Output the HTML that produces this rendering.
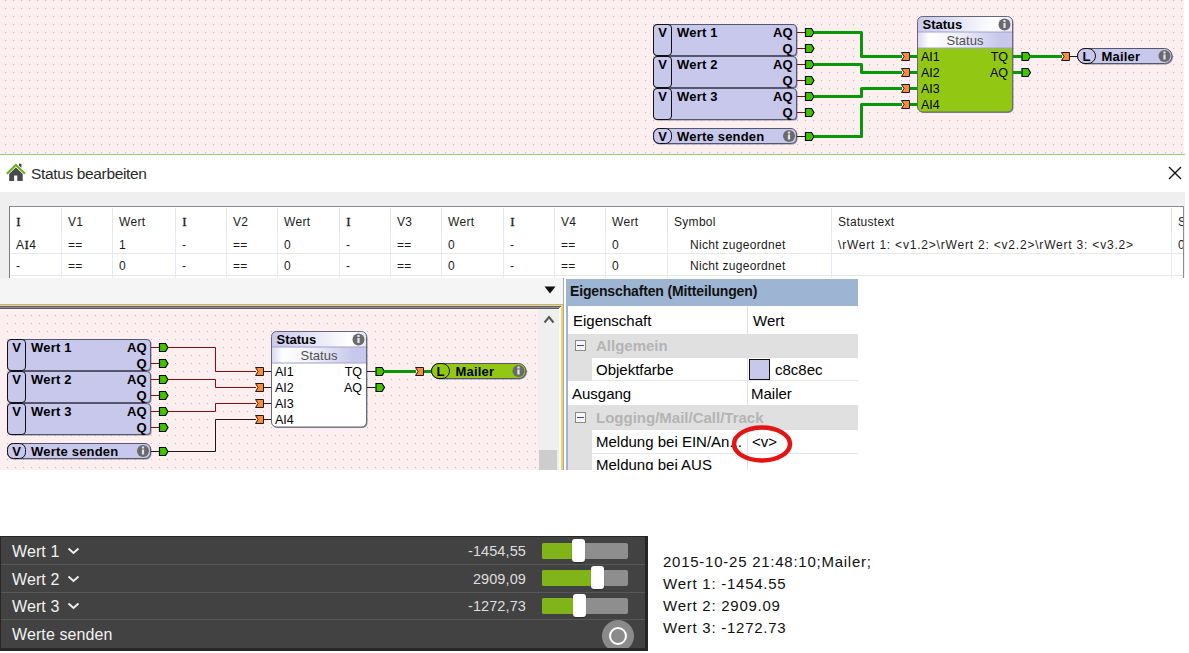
<!DOCTYPE html>
<html><head><meta charset="utf-8">
<style>
*{box-sizing:border-box}
html,body{margin:0;padding:0}
body{width:1189px;height:653px;position:relative;overflow:hidden;background:#fff;font-family:"Liberation Sans",sans-serif;color:#000}
.abs{position:absolute}
.tbl{position:absolute;left:9px;top:206px;width:1175px;height:72px;background:#fff;border-top:1px solid #868b94;border-left:1px solid #767b84;border-right:1px solid #868b94;overflow:hidden}
.tt{position:absolute;font-size:12px;color:#1c1c1c;letter-spacing:0.3px;white-space:nowrap;line-height:14px}
.vl{position:absolute;width:1px}
.si{font-family:"Liberation Serif",serif;font-size:13px;-webkit-text-stroke:0.3px #1c1c1c;letter-spacing:0;margin:0 0.2px 0 0.3px}
.pp{position:absolute;font-size:15px;white-space:nowrap;line-height:18px}
.dk{position:absolute;font-size:16px;letter-spacing:0.1px;color:#f2f2f2;white-space:nowrap;line-height:18px}
.lg{position:absolute;left:663px;font-size:15px;color:#111;white-space:nowrap;letter-spacing:0.75px;line-height:18px}
</style></head><body>

<!-- top canvas -->
<svg class="abs" style="left:0;top:0" width="1184" height="154" viewBox="0 0 1184 154">
<defs><pattern id="dotT" x="5" y="0" width="8" height="8" patternUnits="userSpaceOnUse"><rect width="1" height="1" fill="#bcbcbc"/></pattern></defs>
<rect width="1184" height="154" fill="#fdefef"/>
<rect width="1184" height="154" fill="url(#dotT)"/>
<g transform="translate(646,-315)">
<rect x="8.5" y="340.5" width="143" height="31" rx="3.5" fill="#8c8c9c"/>
<rect x="7.5" y="339.5" width="143" height="31" rx="3.5" fill="#c8c8ec" stroke="#56566a"/>
<rect x="7.5" y="339.5" width="18" height="31" rx="3.5" fill="#c8c8ec" stroke="#111"/>
<text x="16.5" y="352.0" text-anchor="middle" font-weight="bold" font-size="13" font-family="Liberation Sans, sans-serif">V</text>
<text x="31" y="352.0" font-weight="bold" font-size="13" letter-spacing="0.2" font-family="Liberation Sans, sans-serif">Wert 1</text>
<text x="146.5" y="352.0" text-anchor="end" font-size="13" font-family="Liberation Sans, sans-serif" font-weight="bold">AQ</text>
<text x="146.5" y="367.5" text-anchor="end" font-size="13" font-family="Liberation Sans, sans-serif" font-weight="bold">Q</text>
<polyline points="151,347.5 159,347.5" fill="none" stroke="#8a0e0e" stroke-width="1"/>
<polyline points="151,363.5 159,363.5" fill="none" stroke="#8a0e0e" stroke-width="1"/>
<path d="M159.5 343.5h6l2.5 4l-2.5 4h-6z" fill="#40c400" stroke="#050a00" stroke-width="1.2"/>
<path d="M159.5 359.5h6l2.5 4l-2.5 4h-6z" fill="#40c400" stroke="#050a00" stroke-width="1.2"/>
<rect x="8.5" y="372.5" width="143" height="31" rx="3.5" fill="#8c8c9c"/>
<rect x="7.5" y="371.5" width="143" height="31" rx="3.5" fill="#c8c8ec" stroke="#56566a"/>
<rect x="7.5" y="371.5" width="18" height="31" rx="3.5" fill="#c8c8ec" stroke="#111"/>
<text x="16.5" y="384.0" text-anchor="middle" font-weight="bold" font-size="13" font-family="Liberation Sans, sans-serif">V</text>
<text x="31" y="384.0" font-weight="bold" font-size="13" letter-spacing="0.2" font-family="Liberation Sans, sans-serif">Wert 2</text>
<text x="146.5" y="384.0" text-anchor="end" font-size="13" font-family="Liberation Sans, sans-serif" font-weight="bold">AQ</text>
<text x="146.5" y="399.5" text-anchor="end" font-size="13" font-family="Liberation Sans, sans-serif" font-weight="bold">Q</text>
<polyline points="151,379.5 159,379.5" fill="none" stroke="#8a0e0e" stroke-width="1"/>
<polyline points="151,395.5 159,395.5" fill="none" stroke="#8a0e0e" stroke-width="1"/>
<path d="M159.5 375.5h6l2.5 4l-2.5 4h-6z" fill="#40c400" stroke="#050a00" stroke-width="1.2"/>
<path d="M159.5 391.5h6l2.5 4l-2.5 4h-6z" fill="#40c400" stroke="#050a00" stroke-width="1.2"/>
<rect x="8.5" y="404.5" width="143" height="31" rx="3.5" fill="#8c8c9c"/>
<rect x="7.5" y="403.5" width="143" height="31" rx="3.5" fill="#c8c8ec" stroke="#56566a"/>
<rect x="7.5" y="403.5" width="18" height="31" rx="3.5" fill="#c8c8ec" stroke="#111"/>
<text x="16.5" y="416.0" text-anchor="middle" font-weight="bold" font-size="13" font-family="Liberation Sans, sans-serif">V</text>
<text x="31" y="416.0" font-weight="bold" font-size="13" letter-spacing="0.2" font-family="Liberation Sans, sans-serif">Wert 3</text>
<text x="146.5" y="416.0" text-anchor="end" font-size="13" font-family="Liberation Sans, sans-serif" font-weight="bold">AQ</text>
<text x="146.5" y="431.5" text-anchor="end" font-size="13" font-family="Liberation Sans, sans-serif" font-weight="bold">Q</text>
<polyline points="151,411.5 159,411.5" fill="none" stroke="#8a0e0e" stroke-width="1"/>
<polyline points="151,427.5 159,427.5" fill="none" stroke="#8a0e0e" stroke-width="1"/>
<path d="M159.5 407.5h6l2.5 4l-2.5 4h-6z" fill="#40c400" stroke="#050a00" stroke-width="1.2"/>
<path d="M159.5 423.5h6l2.5 4l-2.5 4h-6z" fill="#40c400" stroke="#050a00" stroke-width="1.2"/>
<rect x="8.5" y="444.5" width="143" height="15" rx="5.5" fill="#8c8c9c"/>
<rect x="7.5" y="443.5" width="143" height="15" rx="5.5" fill="#c8c8ec" stroke="#56566a"/>
<rect x="7.5" y="443.5" width="18" height="15" rx="6" fill="#c8c8ec" stroke="#111"/>
<text x="16.5" y="456" text-anchor="middle" font-weight="bold" font-size="13" font-family="Liberation Sans, sans-serif">V</text>
<text x="31" y="456" font-weight="bold" font-size="13" letter-spacing="0.2" font-family="Liberation Sans, sans-serif">Werte senden</text>
<circle cx="143" cy="451" r="6" fill="#6a6a6a"/><rect x="141.9" y="449.5" width="2.2" height="5" fill="#e4e4f4"/><rect x="141.9" y="446.5" width="2.2" height="2" fill="#e4e4f4"/>
<polyline points="151,451.5 159,451.5" fill="none" stroke="#1a1a1a" stroke-width="1"/>
<path d="M159.5 447.5h6l2.5 4l-2.5 4h-6z" fill="#40c400" stroke="#050a00" stroke-width="1.2"/>
<polyline points="168,347.5 215.5,347.5 215.5,371.5 256,371.5" fill="none" stroke="#079807" stroke-width="3" stroke-linejoin="round"/>
<polyline points="168,379.5 215.5,379.5 215.5,387.5 256,387.5" fill="none" stroke="#079807" stroke-width="3" stroke-linejoin="round"/>
<polyline points="168,411.5 215.5,411.5 215.5,403.5 256,403.5" fill="none" stroke="#079807" stroke-width="3" stroke-linejoin="round"/>
<polyline points="168,451.5 215.5,451.5 215.5,419.5 256,419.5" fill="none" stroke="#079807" stroke-width="3" stroke-linejoin="round"/>
<polyline points="264,371.5 272,371.5" fill="none" stroke="#079807" stroke-width="3" stroke-linejoin="round"/>
<path d="M255.5 367.5h8v8h-8l2.5 -4z" fill="#ff8a3a" stroke="#1a1a1a" stroke-width="1"/>
<polyline points="264,387.5 272,387.5" fill="none" stroke="#079807" stroke-width="3" stroke-linejoin="round"/>
<path d="M255.5 383.5h8v8h-8l2.5 -4z" fill="#ff8a3a" stroke="#1a1a1a" stroke-width="1"/>
<polyline points="264,403.5 272,403.5" fill="none" stroke="#079807" stroke-width="3" stroke-linejoin="round"/>
<path d="M255.5 399.5h8v8h-8l2.5 -4z" fill="#ff8a3a" stroke="#1a1a1a" stroke-width="1"/>
<polyline points="264,419.5 272,419.5" fill="none" stroke="#079807" stroke-width="3" stroke-linejoin="round"/>
<path d="M255.5 415.5h8v8h-8l2.5 -4z" fill="#ff8a3a" stroke="#1a1a1a" stroke-width="1"/>
<defs><linearGradient id="hg1" x1="0" x2="1"><stop offset="0" stop-color="#c8c8ec"/><stop offset="0.82" stop-color="#ffffff"/><stop offset="1" stop-color="#e8e8f6"/></linearGradient><linearGradient id="sg1" x1="0" x2="1"><stop offset="0" stop-color="#d8d8ee"/><stop offset="0.12" stop-color="#ffffff"/><stop offset="0.4" stop-color="#f2f2fa"/><stop offset="0.85" stop-color="#c8c8ec"/><stop offset="1" stop-color="#c8c8ec"/></linearGradient><clipPath id="cp1"><rect x="271.5" y="331.5" width="95" height="95.5" rx="5"/></clipPath></defs>
<rect x="272.5" y="332.5" width="95" height="95.5" rx="5" fill="#8c8c9c"/>
<g clip-path="url(#cp1)">
<rect x="271.5" y="331.5" width="95" height="96" fill="#92c814"/>
<rect x="271.5" y="331.5" width="95" height="15.5" fill="url(#hg1)"/>
<rect x="271.5" y="347" width="95" height="16" fill="url(#sg1)"/>
<line x1="271" y1="347" x2="367" y2="347" stroke="#a0a0d0"/>
<line x1="271" y1="363" x2="367" y2="363" stroke="#a0a0d0"/>
</g>
<rect x="271.5" y="331.5" width="95" height="95.5" rx="5" fill="none" stroke="#66667a"/>
<text x="276.5" y="343.5" font-weight="bold" font-size="13" font-family="Liberation Sans, sans-serif">Status</text>
<circle cx="358.5" cy="339.5" r="6" fill="#6a6a6a"/><rect x="357.4" y="338.0" width="2.2" height="5" fill="#e4e4f4"/><rect x="357.4" y="335.0" width="2.2" height="2" fill="#e4e4f4"/>
<text x="319" y="359.5" text-anchor="middle" font-size="13" fill="#505050" font-family="Liberation Sans, sans-serif">Status</text>
<text x="275" y="375.5" font-size="12.5" font-family="Liberation Sans, sans-serif">AI1</text>
<text x="275" y="391.5" font-size="12.5" font-family="Liberation Sans, sans-serif">AI2</text>
<text x="275" y="407.5" font-size="12.5" font-family="Liberation Sans, sans-serif">AI3</text>
<text x="275" y="423.5" font-size="12.5" font-family="Liberation Sans, sans-serif">AI4</text>
<text x="362" y="375.5" text-anchor="end" font-size="12.5" font-family="Liberation Sans, sans-serif">TQ</text>
<text x="362" y="391.5" text-anchor="end" font-size="12.5" font-family="Liberation Sans, sans-serif">AQ</text>
<polyline points="367,371.5 375.5,371.5" fill="none" stroke="#079807" stroke-width="3" stroke-linejoin="round"/>
<path d="M376.0 367.5h6l2.5 4l-2.5 4h-6z" fill="#40c400" stroke="#050a00" stroke-width="1.2"/>
<polyline points="367,387.5 375.5,387.5" fill="none" stroke="#079807" stroke-width="3" stroke-linejoin="round"/>
<path d="M376.0 383.5h6l2.5 4l-2.5 4h-6z" fill="#40c400" stroke="#050a00" stroke-width="1.2"/>
<polyline points="384,371.5 416,371.5" fill="none" stroke="#079807" stroke-width="3" stroke-linejoin="round"/>
<polyline points="424,371.5 432,371.5" fill="none" stroke="#1a1a1a" stroke-width="1"/>
<path d="M415.5 367.5h8v8h-8l2.5 -4z" fill="#ff8a3a" stroke="#1a1a1a" stroke-width="1"/>
<rect x="432.5" y="364.5" width="94.5" height="15" rx="7.5" fill="#8c8c9c"/>
<rect x="431.5" y="363.5" width="94.5" height="15" rx="7.5" fill="#c8c8ec" stroke="#56566a"/>
<rect x="431.5" y="363.5" width="18" height="15" rx="7.5" fill="#c8c8ec" stroke="#111"/>
<text x="440.5" y="376" text-anchor="middle" font-weight="bold" font-size="13" font-family="Liberation Sans, sans-serif">L</text>
<text x="455.5" y="376" font-weight="bold" font-size="13" letter-spacing="0.2" font-family="Liberation Sans, sans-serif">Mailer</text>
<circle cx="518.5" cy="371" r="6" fill="#6a6a6a"/><rect x="517.4" y="369.5" width="2.2" height="5" fill="#e4e4f4"/><rect x="517.4" y="366.5" width="2.2" height="2" fill="#e4e4f4"/>
</g>
</svg>
<div class="abs" style="left:0;top:154px;width:1185px;height:1px;background:#9ccb6a"></div>

<!-- header -->
<svg class="abs" style="left:6px;top:163px" width="20" height="19" viewBox="0 0 20 19">
<path d="M13 0.8h2.4v4.2l-2.4-2z" fill="#3c3c3c"/>
<path d="M3.2 10.2 L9.9 4 L16.7 10.2 V18 H11.3 V12.6 H8.1 V18 H3.2 Z" fill="#4a4a4c"/>
<path d="M0.8 10.8 L9.9 2 L19 10.8" fill="none" stroke="#fff" stroke-width="3.4"/>
<path d="M0.8 10.8 L9.9 2 L19 10.8" fill="none" stroke="#6cae1c" stroke-width="2.1"/>
</svg>
<div class="abs" style="left:31px;top:164px;font-size:15.5px;color:#2a2a2a;line-height:20px;white-space:nowrap;letter-spacing:-0.35px">Status bearbeiten</div>
<svg class="abs" style="left:1168px;top:166px" width="14" height="14" viewBox="0 0 14 14"><path d="M1 1L13 13M13 1L1 13" stroke="#111" stroke-width="1.4"/></svg>

<!-- grey band -->
<div class="abs" style="left:0;top:192px;width:1185px;height:86px;background:#efefef"></div>
<div class="tbl">
<div class="vl" style="left:51px;top:1px;height:24px;background:#e4e4e4"></div>
<div class="vl" style="left:51px;top:25px;height:46px;background:#e3ebf6"></div>
<div class="vl" style="left:102px;top:1px;height:24px;background:#e4e4e4"></div>
<div class="vl" style="left:102px;top:25px;height:46px;background:#e3ebf6"></div>
<div class="vl" style="left:165px;top:1px;height:24px;background:#e4e4e4"></div>
<div class="vl" style="left:165px;top:25px;height:46px;background:#e3ebf6"></div>
<div class="vl" style="left:216px;top:1px;height:24px;background:#e4e4e4"></div>
<div class="vl" style="left:216px;top:25px;height:46px;background:#e3ebf6"></div>
<div class="vl" style="left:267px;top:1px;height:24px;background:#e4e4e4"></div>
<div class="vl" style="left:267px;top:25px;height:46px;background:#e3ebf6"></div>
<div class="vl" style="left:329px;top:1px;height:24px;background:#e4e4e4"></div>
<div class="vl" style="left:329px;top:25px;height:46px;background:#e3ebf6"></div>
<div class="vl" style="left:380px;top:1px;height:24px;background:#e4e4e4"></div>
<div class="vl" style="left:380px;top:25px;height:46px;background:#e3ebf6"></div>
<div class="vl" style="left:431px;top:1px;height:24px;background:#e4e4e4"></div>
<div class="vl" style="left:431px;top:25px;height:46px;background:#e3ebf6"></div>
<div class="vl" style="left:493px;top:1px;height:24px;background:#e4e4e4"></div>
<div class="vl" style="left:493px;top:25px;height:46px;background:#e3ebf6"></div>
<div class="vl" style="left:544px;top:1px;height:24px;background:#e4e4e4"></div>
<div class="vl" style="left:544px;top:25px;height:46px;background:#e3ebf6"></div>
<div class="vl" style="left:595px;top:1px;height:24px;background:#e4e4e4"></div>
<div class="vl" style="left:595px;top:25px;height:46px;background:#e3ebf6"></div>
<div class="vl" style="left:657px;top:1px;height:24px;background:#e4e4e4"></div>
<div class="vl" style="left:657px;top:25px;height:46px;background:#e3ebf6"></div>
<div class="vl" style="left:821px;top:1px;height:24px;background:#e4e4e4"></div>
<div class="vl" style="left:821px;top:25px;height:46px;background:#e3ebf6"></div>
<div class="vl" style="left:1161px;top:1px;height:24px;background:#e4e4e4"></div>
<div class="vl" style="left:1161px;top:25px;height:46px;background:#e3ebf6"></div>
<div class="abs" style="left:1px;top:46px;width:1173px;height:1px;background:#e8e8e8"></div>
<div class="abs" style="left:1px;top:68px;width:1173px;height:1px;background:#e8e8e8"></div>
<div class="tt" style="left:6px;top:8px"><span class="si">I</span></div>
<div class="tt" style="left:6px;top:31px">A<span class="si">I</span>4</div>
<div class="tt" style="left:6px;top:52px">-</div>
<div class="tt" style="left:58px;top:8px">V1</div>
<div class="tt" style="left:58px;top:31px">==</div>
<div class="tt" style="left:58px;top:52px">==</div>
<div class="tt" style="left:109px;top:8px">Wert</div>
<div class="tt" style="left:109px;top:31px">1</div>
<div class="tt" style="left:109px;top:52px">0</div>
<div class="tt" style="left:172px;top:8px"><span class="si">I</span></div>
<div class="tt" style="left:172px;top:31px">-</div>
<div class="tt" style="left:172px;top:52px">-</div>
<div class="tt" style="left:223px;top:8px">V2</div>
<div class="tt" style="left:223px;top:31px">==</div>
<div class="tt" style="left:223px;top:52px">==</div>
<div class="tt" style="left:274px;top:8px">Wert</div>
<div class="tt" style="left:274px;top:31px">0</div>
<div class="tt" style="left:274px;top:52px">0</div>
<div class="tt" style="left:336px;top:8px"><span class="si">I</span></div>
<div class="tt" style="left:336px;top:31px">-</div>
<div class="tt" style="left:336px;top:52px">-</div>
<div class="tt" style="left:387px;top:8px">V3</div>
<div class="tt" style="left:387px;top:31px">==</div>
<div class="tt" style="left:387px;top:52px">==</div>
<div class="tt" style="left:438px;top:8px">Wert</div>
<div class="tt" style="left:438px;top:31px">0</div>
<div class="tt" style="left:438px;top:52px">0</div>
<div class="tt" style="left:500px;top:8px"><span class="si">I</span></div>
<div class="tt" style="left:500px;top:31px">-</div>
<div class="tt" style="left:500px;top:52px">-</div>
<div class="tt" style="left:551px;top:8px">V4</div>
<div class="tt" style="left:551px;top:31px">==</div>
<div class="tt" style="left:551px;top:52px">==</div>
<div class="tt" style="left:602px;top:8px">Wert</div>
<div class="tt" style="left:602px;top:31px">0</div>
<div class="tt" style="left:602px;top:52px">0</div>
<div class="tt" style="left:664px;top:8px">Symbol</div>
<div class="tt" style="left:680px;top:31px">Nicht zugeordnet</div>
<div class="tt" style="left:680px;top:52px">Nicht zugeordnet</div>
<div class="tt" style="left:828px;top:8px">Statustext</div>
<div class="tt" style="left:828px;top:31px;letter-spacing:0.8px">\rWert 1: &lt;v1.2&gt;\rWert 2: &lt;v2.2&gt;\rWert 3: &lt;v3.2&gt;</div>
<div class="tt" style="left:828px;top:52px"></div>
<div class="tt" style="left:1168px;top:8px">S</div>
<div class="tt" style="left:1168px;top:31px">0</div>
<div class="tt" style="left:1168px;top:52px"></div>
</div>

<!-- toolbar -->
<div class="abs" style="left:0;top:278px;width:563px;height:26px;background:#f5f5f5"></div>
<div class="abs" style="left:563px;top:278px;width:1px;height:192px;background:#a8a8a8"></div>
<svg class="abs" style="left:544px;top:286px" width="12" height="8" viewBox="0 0 12 8"><path d="M0.5 0.5H11.5L6 7.5Z" fill="#111"/></svg>

<!-- frame lines -->
<div class="abs" style="left:0;top:304px;width:563px;height:1px;background:#b4b4b4"></div>
<div class="abs" style="left:0;top:305px;width:563px;height:1px;background:#f8d060"></div>
<div class="abs" style="left:559px;top:306px;width:2px;height:164px;background:#fafafa"></div>
<div class="abs" style="left:561px;top:305px;width:2px;height:165px;background:#f8d060"></div>
<div class="abs" style="left:0;top:306px;width:561px;height:1px;background:#666"></div>
<div class="abs" style="left:0;top:307px;width:560px;height:1px;background:#8c8c8c"></div>
<div class="abs" style="left:0;top:308px;width:559px;height:1px;background:#5e5e5e"></div>

<!-- bottom canvas -->
<svg class="abs" style="left:0;top:309px" width="538" height="161" viewBox="0 309 538 161">
<defs><pattern id="dotB" x="7" y="3" width="8" height="8" patternUnits="userSpaceOnUse"><rect width="1" height="1" fill="#bcbcbc"/></pattern></defs>
<rect x="0" y="309" width="538" height="161" fill="#fdefef"/>
<rect x="0" y="309" width="538" height="161" fill="url(#dotB)"/>
<rect x="8.5" y="340.5" width="143" height="31" rx="3.5" fill="#8c8c9c"/>
<rect x="7.5" y="339.5" width="143" height="31" rx="3.5" fill="#c8c8ec" stroke="#56566a"/>
<rect x="7.5" y="339.5" width="18" height="31" rx="3.5" fill="#c8c8ec" stroke="#111"/>
<text x="16.5" y="352.0" text-anchor="middle" font-weight="bold" font-size="13" font-family="Liberation Sans, sans-serif">V</text>
<text x="31" y="352.0" font-weight="bold" font-size="13" letter-spacing="0.2" font-family="Liberation Sans, sans-serif">Wert 1</text>
<text x="146.5" y="352.0" text-anchor="end" font-size="13" font-family="Liberation Sans, sans-serif" font-weight="bold">AQ</text>
<text x="146.5" y="367.5" text-anchor="end" font-size="13" font-family="Liberation Sans, sans-serif" font-weight="bold">Q</text>
<polyline points="151,347.5 159,347.5" fill="none" stroke="#8a0e0e" stroke-width="1"/>
<polyline points="151,363.5 159,363.5" fill="none" stroke="#8a0e0e" stroke-width="1"/>
<path d="M159.5 343.5h6l2.5 4l-2.5 4h-6z" fill="#40c400" stroke="#050a00" stroke-width="1.2"/>
<path d="M159.5 359.5h6l2.5 4l-2.5 4h-6z" fill="#40c400" stroke="#050a00" stroke-width="1.2"/>
<rect x="8.5" y="372.5" width="143" height="31" rx="3.5" fill="#8c8c9c"/>
<rect x="7.5" y="371.5" width="143" height="31" rx="3.5" fill="#c8c8ec" stroke="#56566a"/>
<rect x="7.5" y="371.5" width="18" height="31" rx="3.5" fill="#c8c8ec" stroke="#111"/>
<text x="16.5" y="384.0" text-anchor="middle" font-weight="bold" font-size="13" font-family="Liberation Sans, sans-serif">V</text>
<text x="31" y="384.0" font-weight="bold" font-size="13" letter-spacing="0.2" font-family="Liberation Sans, sans-serif">Wert 2</text>
<text x="146.5" y="384.0" text-anchor="end" font-size="13" font-family="Liberation Sans, sans-serif" font-weight="bold">AQ</text>
<text x="146.5" y="399.5" text-anchor="end" font-size="13" font-family="Liberation Sans, sans-serif" font-weight="bold">Q</text>
<polyline points="151,379.5 159,379.5" fill="none" stroke="#8a0e0e" stroke-width="1"/>
<polyline points="151,395.5 159,395.5" fill="none" stroke="#8a0e0e" stroke-width="1"/>
<path d="M159.5 375.5h6l2.5 4l-2.5 4h-6z" fill="#40c400" stroke="#050a00" stroke-width="1.2"/>
<path d="M159.5 391.5h6l2.5 4l-2.5 4h-6z" fill="#40c400" stroke="#050a00" stroke-width="1.2"/>
<rect x="8.5" y="404.5" width="143" height="31" rx="3.5" fill="#8c8c9c"/>
<rect x="7.5" y="403.5" width="143" height="31" rx="3.5" fill="#c8c8ec" stroke="#56566a"/>
<rect x="7.5" y="403.5" width="18" height="31" rx="3.5" fill="#c8c8ec" stroke="#111"/>
<text x="16.5" y="416.0" text-anchor="middle" font-weight="bold" font-size="13" font-family="Liberation Sans, sans-serif">V</text>
<text x="31" y="416.0" font-weight="bold" font-size="13" letter-spacing="0.2" font-family="Liberation Sans, sans-serif">Wert 3</text>
<text x="146.5" y="416.0" text-anchor="end" font-size="13" font-family="Liberation Sans, sans-serif" font-weight="bold">AQ</text>
<text x="146.5" y="431.5" text-anchor="end" font-size="13" font-family="Liberation Sans, sans-serif" font-weight="bold">Q</text>
<polyline points="151,411.5 159,411.5" fill="none" stroke="#8a0e0e" stroke-width="1"/>
<polyline points="151,427.5 159,427.5" fill="none" stroke="#8a0e0e" stroke-width="1"/>
<path d="M159.5 407.5h6l2.5 4l-2.5 4h-6z" fill="#40c400" stroke="#050a00" stroke-width="1.2"/>
<path d="M159.5 423.5h6l2.5 4l-2.5 4h-6z" fill="#40c400" stroke="#050a00" stroke-width="1.2"/>
<rect x="8.5" y="444.5" width="143" height="15" rx="5.5" fill="#8c8c9c"/>
<rect x="7.5" y="443.5" width="143" height="15" rx="5.5" fill="#c8c8ec" stroke="#56566a"/>
<rect x="7.5" y="443.5" width="18" height="15" rx="6" fill="#c8c8ec" stroke="#111"/>
<text x="16.5" y="456" text-anchor="middle" font-weight="bold" font-size="13" font-family="Liberation Sans, sans-serif">V</text>
<text x="31" y="456" font-weight="bold" font-size="13" letter-spacing="0.2" font-family="Liberation Sans, sans-serif">Werte senden</text>
<circle cx="143" cy="451" r="6" fill="#6a6a6a"/><rect x="141.9" y="449.5" width="2.2" height="5" fill="#e4e4f4"/><rect x="141.9" y="446.5" width="2.2" height="2" fill="#e4e4f4"/>
<polyline points="151,451.5 159,451.5" fill="none" stroke="#1a1a1a" stroke-width="1"/>
<path d="M159.5 447.5h6l2.5 4l-2.5 4h-6z" fill="#40c400" stroke="#050a00" stroke-width="1.2"/>
<polyline points="168,347.5 215.5,347.5 215.5,371.5 256,371.5" fill="none" stroke="#8a0e0e" stroke-width="1"/>
<polyline points="168,379.5 215.5,379.5 215.5,387.5 256,387.5" fill="none" stroke="#8a0e0e" stroke-width="1"/>
<polyline points="168,411.5 215.5,411.5 215.5,403.5 256,403.5" fill="none" stroke="#8a0e0e" stroke-width="1"/>
<polyline points="168,451.5 215.5,451.5 215.5,419.5 256,419.5" fill="none" stroke="#1a1a1a" stroke-width="1"/>
<polyline points="264,371.5 272,371.5" fill="none" stroke="#1a1a1a" stroke-width="1"/>
<path d="M255.5 367.5h8v8h-8l2.5 -4z" fill="#ff8a3a" stroke="#1a1a1a" stroke-width="1"/>
<polyline points="264,387.5 272,387.5" fill="none" stroke="#1a1a1a" stroke-width="1"/>
<path d="M255.5 383.5h8v8h-8l2.5 -4z" fill="#ff8a3a" stroke="#1a1a1a" stroke-width="1"/>
<polyline points="264,403.5 272,403.5" fill="none" stroke="#1a1a1a" stroke-width="1"/>
<path d="M255.5 399.5h8v8h-8l2.5 -4z" fill="#ff8a3a" stroke="#1a1a1a" stroke-width="1"/>
<polyline points="264,419.5 272,419.5" fill="none" stroke="#1a1a1a" stroke-width="1"/>
<path d="M255.5 415.5h8v8h-8l2.5 -4z" fill="#ff8a3a" stroke="#1a1a1a" stroke-width="1"/>
<defs><linearGradient id="hg0" x1="0" x2="1"><stop offset="0" stop-color="#c8c8ec"/><stop offset="0.82" stop-color="#ffffff"/><stop offset="1" stop-color="#e8e8f6"/></linearGradient><linearGradient id="sg0" x1="0" x2="1"><stop offset="0" stop-color="#d8d8ee"/><stop offset="0.12" stop-color="#ffffff"/><stop offset="0.4" stop-color="#f2f2fa"/><stop offset="0.85" stop-color="#c8c8ec"/><stop offset="1" stop-color="#c8c8ec"/></linearGradient><clipPath id="cp0"><rect x="271.5" y="331.5" width="95" height="95.5" rx="5"/></clipPath></defs>
<rect x="272.5" y="332.5" width="95" height="95.5" rx="5" fill="#8c8c9c"/>
<g clip-path="url(#cp0)">
<rect x="271.5" y="331.5" width="95" height="96" fill="#ffffff"/>
<rect x="271.5" y="331.5" width="95" height="15.5" fill="url(#hg0)"/>
<rect x="271.5" y="347" width="95" height="16" fill="url(#sg0)"/>
<line x1="271" y1="347" x2="367" y2="347" stroke="#a0a0d0"/>
<line x1="271" y1="363" x2="367" y2="363" stroke="#a0a0d0"/>
</g>
<rect x="271.5" y="331.5" width="95" height="95.5" rx="5" fill="none" stroke="#66667a"/>
<text x="276.5" y="343.5" font-weight="bold" font-size="13" font-family="Liberation Sans, sans-serif">Status</text>
<circle cx="358.5" cy="339.5" r="6" fill="#6a6a6a"/><rect x="357.4" y="338.0" width="2.2" height="5" fill="#e4e4f4"/><rect x="357.4" y="335.0" width="2.2" height="2" fill="#e4e4f4"/>
<text x="319" y="359.5" text-anchor="middle" font-size="13" fill="#505050" font-family="Liberation Sans, sans-serif">Status</text>
<text x="275" y="375.5" font-size="12.5" font-family="Liberation Sans, sans-serif">AI1</text>
<text x="275" y="391.5" font-size="12.5" font-family="Liberation Sans, sans-serif">AI2</text>
<text x="275" y="407.5" font-size="12.5" font-family="Liberation Sans, sans-serif">AI3</text>
<text x="275" y="423.5" font-size="12.5" font-family="Liberation Sans, sans-serif">AI4</text>
<text x="362" y="375.5" text-anchor="end" font-size="12.5" font-family="Liberation Sans, sans-serif">TQ</text>
<text x="362" y="391.5" text-anchor="end" font-size="12.5" font-family="Liberation Sans, sans-serif">AQ</text>
<polyline points="367,371.5 375.5,371.5" fill="none" stroke="#1a1a1a" stroke-width="1"/>
<path d="M376.0 367.5h6l2.5 4l-2.5 4h-6z" fill="#40c400" stroke="#050a00" stroke-width="1.2"/>
<polyline points="367,387.5 375.5,387.5" fill="none" stroke="#1a1a1a" stroke-width="1"/>
<path d="M376.0 383.5h6l2.5 4l-2.5 4h-6z" fill="#40c400" stroke="#050a00" stroke-width="1.2"/>
<polyline points="384,371.5 416,371.5" fill="none" stroke="#079807" stroke-width="3" stroke-linejoin="round"/>
<polyline points="424,371.5 432,371.5" fill="none" stroke="#079807" stroke-width="3" stroke-linejoin="round"/>
<path d="M415.5 367.5h8v8h-8l2.5 -4z" fill="#ff8a3a" stroke="#1a1a1a" stroke-width="1"/>
<rect x="432.5" y="364.5" width="94.5" height="15" rx="7.5" fill="#8c8c9c"/>
<rect x="431.5" y="363.5" width="94.5" height="15" rx="7.5" fill="#92c814" stroke="#56566a"/>
<rect x="431.5" y="363.5" width="18" height="15" rx="7.5" fill="#92c814" stroke="#111"/>
<text x="440.5" y="376" text-anchor="middle" font-weight="bold" font-size="13" font-family="Liberation Sans, sans-serif">L</text>
<text x="455.5" y="376" font-weight="bold" font-size="13" letter-spacing="0.2" font-family="Liberation Sans, sans-serif">Mailer</text>
<circle cx="518.5" cy="371" r="6" fill="#6a6a6a"/><rect x="517.4" y="369.5" width="2.2" height="5" fill="#e4e4f4"/><rect x="517.4" y="366.5" width="2.2" height="2" fill="#e4e4f4"/>
</svg>
<!-- scrollbar -->
<div class="abs" style="left:538px;top:309px;width:21px;height:161px;background:#efefef"></div>
<svg class="abs" style="left:542.5px;top:315px" width="12" height="9" viewBox="0 0 12 9"><path d="M1.5 7.5L6 2L10.5 7.5" fill="none" stroke="#555" stroke-width="2"/></svg>
<div class="abs" style="left:539px;top:450px;width:18px;height:20px;background:#cdcdcd"></div>

<!-- properties -->
<div class="abs" style="left:566px;top:279px;width:292px;height:191px;background:#fff;overflow:hidden">
 <div class="abs" style="left:0;top:0;width:292px;height:27px;background:#9db4d2"></div>
 <div class="pp" style="left:4px;top:3.2px;font-weight:bold;font-size:14px;letter-spacing:-0.15px;color:#111">Eigenschaften (Mitteilungen)</div>
 <div class="abs" style="left:0;top:27px;width:2px;height:164px;background:#9db4d2"></div>
 <div class="abs" style="left:2px;top:55px;width:290px;height:24px;background:#e0e0e0"></div>
 <div class="abs" style="left:2px;top:79px;width:24px;height:23px;background:#e0e0e0"></div>
 <div class="abs" style="left:2px;top:126px;width:290px;height:25px;background:#e0e0e0"></div>
 <div class="abs" style="left:2px;top:151px;width:24px;height:40px;background:#e0e0e0"></div>
 <div class="abs" style="left:181px;top:27px;width:1px;height:28px;background:#e2e2e2"></div>
 <div class="abs" style="left:181px;top:79px;width:1px;height:47px;background:#e2e2e2"></div>
 <div class="abs" style="left:181px;top:151px;width:1px;height:40px;background:#e2e2e2"></div>
 <div class="abs" style="left:26px;top:101px;width:266px;height:1px;background:#e6e6e6"></div>
 <div class="abs" style="left:26px;top:174px;width:266px;height:1px;background:#e6e6e6"></div>
 <div class="pp" style="left:7px;top:33px">Eigenschaft</div>
 <div class="pp" style="left:187px;top:33px">Wert</div>
 <div class="abs" style="left:9px;top:61px;width:11px;height:11px;border:1px solid #888;background:#f8f8f8"></div>
 <div class="abs" style="left:11px;top:66px;width:7px;height:1px;background:#3a4aa0"></div>
 <div class="pp" style="left:30px;top:58px;font-weight:bold;color:#b4b4b4">Allgemein</div>
 <div class="pp" style="left:30px;top:82px">Objektfarbe</div>
 <div class="abs" style="left:183px;top:80px;width:21px;height:21px;border:1px solid #111;background:#c8c8ec"></div>
 <div class="pp" style="left:209px;top:82px">c8c8ec</div>
 <div class="pp" style="left:6px;top:106px">Ausgang</div>
 <div class="pp" style="left:185px;top:106px">Mailer</div>
 <div class="abs" style="left:9px;top:133px;width:11px;height:11px;border:1px solid #888;background:#f8f8f8"></div>
 <div class="abs" style="left:11px;top:138px;width:7px;height:1px;background:#3a4aa0"></div>
 <div class="pp" style="left:30px;top:130px;font-weight:bold;color:#b4b4b4">Logging/Mail/Call/Track</div>
 <div class="pp" style="left:30px;top:154px;width:150px;overflow:hidden">Meldung bei EIN/An...</div>
 <div class="pp" style="left:186px;top:154px">&lt;v&gt;</div>
 <div class="pp" style="left:30px;top:177px">Meldung bei AUS</div>
 <svg class="abs" style="left:164px;top:145px" width="66" height="42" viewBox="0 0 66 42"><ellipse cx="32" cy="20" rx="28" ry="16.5" fill="none" stroke="#e41414" stroke-width="4.5"/></svg>
</div>

<!-- dark panel -->
<div class="abs" style="left:0;top:536px;width:648px;height:115px;background:#262626"></div>
<div class="abs" style="left:1px;top:537px;width:644px;height:111px;background:#424242"></div>
<div class="abs" style="left:1px;top:564px;width:644px;height:1px;background:#575757"></div>
<div class="abs" style="left:1px;top:592px;width:644px;height:1px;background:#575757"></div>
<div class="abs" style="left:1px;top:619px;width:644px;height:1px;background:#575757"></div>
<div class="dk" style="left:12px;top:543px">Wert 1</div>
<div class="dk" style="left:12px;top:571px">Wert 2</div>
<div class="dk" style="left:12px;top:598px">Wert 3</div>
<div class="dk" style="left:12px;top:626px">Werte senden</div>
<svg class="abs" style="left:67px;top:547px" width="13" height="8" viewBox="0 0 13 8"><path d="M1.5 1.5L6.5 6L11.5 1.5" fill="none" stroke="#f0f0f0" stroke-width="1.9"/></svg>
<div class="dk" style="left:400px;width:126px;text-align:right;top:542px;color:#dedede;font-size:14.5px">-1454,55</div>
<div class="abs" style="left:542px;top:543px;width:86px;height:16px;border-radius:2px;background:#8e8e8e"></div>
<div class="abs" style="left:542px;top:543px;width:34px;height:16px;border-radius:2px 0 0 2px;background:#80b419"></div>
<div class="abs" style="left:572px;top:539px;width:13px;height:23px;border-radius:3px;background:#fff;box-shadow:0 1px 1px rgba(0,0,0,0.35)"></div>
<svg class="abs" style="left:67px;top:575px" width="13" height="8" viewBox="0 0 13 8"><path d="M1.5 1.5L6.5 6L11.5 1.5" fill="none" stroke="#f0f0f0" stroke-width="1.9"/></svg>
<div class="dk" style="left:400px;width:126px;text-align:right;top:570px;color:#dedede;font-size:14.5px">2909,09</div>
<div class="abs" style="left:542px;top:570px;width:86px;height:16px;border-radius:2px;background:#8e8e8e"></div>
<div class="abs" style="left:542px;top:570px;width:53px;height:16px;border-radius:2px 0 0 2px;background:#80b419"></div>
<div class="abs" style="left:591px;top:566px;width:13px;height:23px;border-radius:3px;background:#fff;box-shadow:0 1px 1px rgba(0,0,0,0.35)"></div>
<svg class="abs" style="left:67px;top:602px" width="13" height="8" viewBox="0 0 13 8"><path d="M1.5 1.5L6.5 6L11.5 1.5" fill="none" stroke="#f0f0f0" stroke-width="1.9"/></svg>
<div class="dk" style="left:400px;width:126px;text-align:right;top:597px;color:#dedede;font-size:14.5px">-1272,73</div>
<div class="abs" style="left:542px;top:598px;width:86px;height:16px;border-radius:2px;background:#8e8e8e"></div>
<div class="abs" style="left:542px;top:598px;width:35px;height:16px;border-radius:2px 0 0 2px;background:#80b419"></div>
<div class="abs" style="left:573px;top:594px;width:13px;height:23px;border-radius:3px;background:#fff;box-shadow:0 1px 1px rgba(0,0,0,0.35)"></div>
<div class="abs" style="left:602px;top:620px;width:32px;height:28px;overflow:hidden"><div style="position:absolute;left:0;top:0;width:32px;height:32px;border-radius:50%;background:#8a8a8a"></div><div style="position:absolute;left:7px;top:7px;width:18px;height:18px;border-radius:50%;border:2.5px solid #fff;background:#8a8a8a"></div></div>

<!-- log -->
<div class="lg" style="top:553px">2015-10-25 21:48:10;Mailer;</div>
<div class="lg" style="top:575px">Wert 1: -1454.55</div>
<div class="lg" style="top:597px">Wert 2: 2909.09</div>
<div class="lg" style="top:619px">Wert 3: -1272.73</div>
</body></html>
